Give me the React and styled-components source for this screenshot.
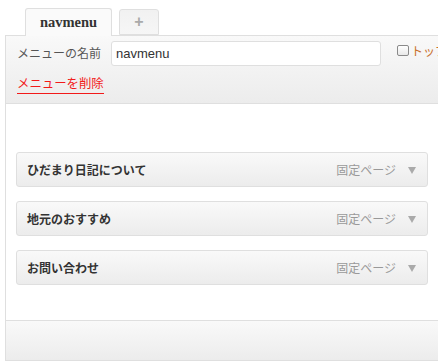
import React from "react";
import styled, { createGlobalStyle } from "styled-components";

const Global = createGlobalStyle`
  html, body { margin: 0; padding: 0; background: #fff; overflow: hidden; }
  body { font-family: "Liberation Sans", "Noto Sans CJK JP", sans-serif; }
`;

const Page = styled.div`
  width: 438px;
  height: 364px;
  overflow: hidden;
  position: relative;
`;

const TabBar = styled.div`
  display: flex;
  align-items: flex-end;
  gap: 7px;
  padding: 8px 0 0 25px;
  height: 27px;
  box-sizing: content-box;
  position: relative;
  z-index: 2;
`;

const Tab = styled.div`
  box-sizing: border-box;
  height: ${(p) => (p.$active ? "28px" : "26px")};
  margin-bottom: ${(p) => (p.$active ? "-1px" : "0")};
  width: ${(p) => p.$w}px;
  border: 1px solid #dfdfdf;
  border-bottom: ${(p) => (p.$active ? "none" : "1px solid #dfdfdf")};
  border-radius: 3px 3px 0 0;
  background: ${(p) => (p.$active ? "#fafafa" : "linear-gradient(#f1f1f1, #f6f6f6)")};
  display: flex;
  align-items: center;
  justify-content: center;
  font-family: ${(p) => (p.$active ? '"Liberation Serif", serif' : '"Liberation Sans", sans-serif')};
  font-weight: bold;
  font-size: ${(p) => (p.$active ? "14.5px" : "16px")};
  color: ${(p) => (p.$active ? "#333" : "#aaa")};
  padding-bottom: ${(p) => (p.$active ? "1px" : "0")};
`;

const Panel = styled.div`
  margin-left: 5px;
  width: 460px;
  border: 1px solid #dfdfdf;
  border-right: none;
  position: relative;
  z-index: 1;
`;

const Header = styled.div`
  background: linear-gradient(#f9f9f9, #ececec);
  border-bottom: 1px solid #dfdfdf;
  padding: 4px 0 0 11px;
  height: 63px;
  box-sizing: content-box;
  display: flex;
  flex-direction: column;
`;

const NameRow = styled.div`
  display: flex;
  align-items: center;
  height: 26px;
  white-space: nowrap;
`;

const Label = styled.span`
  flex-shrink: 0;
  font-family: "Noto Sans CJK JP", sans-serif;
  font-size: 12px;
  color: #555;
  width: 94px;
  margin-top: -2px;
`;

const NameInput = styled.div`
  flex-shrink: 0;
  box-sizing: border-box;
  width: 270px;
  height: 25px;
  border: 1px solid #dfdfdf;
  border-radius: 3px;
  background: #fff;
  font-family: "Liberation Sans", sans-serif;
  font-size: 13px;
  color: #333;
  display: flex;
  align-items: center;
  padding-left: 4px;
`;

const CheckLabel = styled.label`
  flex-shrink: 0;
  display: flex;
  align-items: center;
  margin-left: 16px;
  margin-top: -6px;
  font-family: "Noto Sans CJK JP", sans-serif;
  font-size: 12px;
  color: #c8702c;
`;

const Box = styled.span`
  box-sizing: border-box;
  width: 12px;
  height: 11px;
  border: 1px solid #8a8a8a;
  border-radius: 2px;
  background: linear-gradient(#fff, #e8e8e8);
  margin-right: 2px;
`;

const DeleteRow = styled.div`
  display: flex;
  margin-top: 9px;
`;

const DeleteLink = styled.span`
  font-family: "Noto Sans CJK JP", sans-serif;
  font-size: 12.4px;
  color: #f21a1a;
  border-bottom: 1px solid #f21a1a;
  line-height: 17px;
  padding-bottom: 1px;
`;

const Body = styled.div`
  background: #fff;
  padding: 48px 0 35px 10px;
  display: flex;
  flex-direction: column;
  gap: 14px;
`;

const Item = styled.div`
  box-sizing: border-box;
  width: 412px;
  height: 35px;
  border: 1px solid #dfdfdf;
  border-radius: 3px;
  background: linear-gradient(#f9f9f9, #ececec);
  display: flex;
  align-items: center;
  padding: 0 11px 0 10px;
`;

const ItemTitle = styled.span`
  flex: 1;
  font-family: "Noto Sans CJK JP", sans-serif;
  font-weight: bold;
  font-size: 12px;
  color: #333;
`;

const ItemType = styled.span`
  font-family: "Noto Sans CJK JP", sans-serif;
  font-size: 12px;
  color: #999;
  margin-right: 12px;
`;

const Arrow = styled.span`
  width: 0;
  height: 0;
  border-left: 4px solid transparent;
  border-right: 4px solid transparent;
  border-top: 7px solid #aaa;
  margin-top: 2px;
`;

const Footer = styled.div`
  border-top: 1px solid #dfdfdf;
  background: linear-gradient(#f9f9f9, #ececec);
  height: 39px;
`;

const items = ["ひだまり日記について", "地元のおすすめ", "お問い合わせ"];

export default function App() {
  return (
    <Page>
      <Global />
      <TabBar>
        <Tab $active $w={87}>navmenu</Tab>
        <Tab $w={40}>+</Tab>
      </TabBar>
      <Panel>
        <Header>
          <NameRow>
            <Label>メニューの名前</Label>
            <NameInput>navmenu</NameInput>
            <CheckLabel>
              <Box />
              トップレベルページを自動的に追加
            </CheckLabel>
          </NameRow>
          <DeleteRow>
            <DeleteLink>メニューを削除</DeleteLink>
          </DeleteRow>
        </Header>
        <Body>
          {items.map((t) => (
            <Item key={t}>
              <ItemTitle>{t}</ItemTitle>
              <ItemType>固定ページ</ItemType>
              <Arrow />
            </Item>
          ))}
        </Body>
        <Footer />
      </Panel>
    </Page>
  );
}
